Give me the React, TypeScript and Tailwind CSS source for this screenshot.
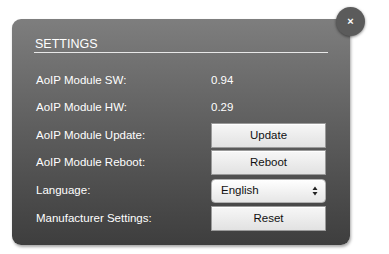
import React from "react";

const font = { fontFamily: '"Liberation Sans", Arial, Helvetica, sans-serif' };

function Btn({ label }: { label: string }) {
  return (
    <div className="w-[115px] h-[25px] flex items-center justify-center border border-[#9a9a9a] bg-gradient-to-b from-[#f7f7f7] to-[#e2e2e2] text-[#111] text-[11.5px] shadow-[inset_0_1px_0_#fff]">
      {label}
    </div>
  );
}

function Row({ label, children, h }: { label: string; children: React.ReactNode; h: string }) {
  return (
    <div className={`flex items-center ${h}`}>
      <div className="w-[175px] text-white text-[11.5px]">{label}</div>
      {children}
    </div>
  );
}

export default function App() {
  return (
    <div className="w-[389px] h-[254px] bg-white pl-[12px] pt-[19px]" style={font}>
      <div className="relative w-[338px] h-[226px] rounded-[9px] bg-gradient-to-b from-[#7e7e7e] to-[#3e3e3e] shadow-[1px_2px_3px_rgba(0,0,0,0.35)] pl-[22px] pr-[22px] pt-[18px]">
        <div className="absolute right-[-15px] top-[-12px] w-[29px] h-[29px] rounded-full bg-[#5b5b5b] shadow-[0_1px_3px_rgba(0,0,0,0.5)] flex items-center justify-center text-white text-[11px] font-bold leading-none">
          ×
        </div>
        <div className="border-b border-[#e8e8e8] pb-[1px] pl-[1px] text-white text-[12.5px] leading-[14px]">
          SETTINGS
        </div>
        <div className="mt-[14px] pl-[2px] flex flex-col">
          <Row label="AoIP Module SW:" h="h-[27px]">
            <span className="text-white text-[11.5px]">0.94</span>
          </Row>
          <Row label="AoIP Module HW:" h="h-[27px]">
            <span className="text-white text-[11.5px]">0.29</span>
          </Row>
          <div className="mt-[2px] flex flex-col gap-[2px]">
            <Row label="AoIP Module Update:" h="h-[25px]">
              <Btn label="Update" />
            </Row>
            <Row label="AoIP Module Reboot:" h="h-[25px]">
              <Btn label="Reboot" />
            </Row>
            <Row label="Language:" h="h-[27px]">
              <div className="w-[115px] h-[24px] rounded-[4px] bg-gradient-to-b from-[#ffffff] to-[#e6e6e6] border border-[#b0b0b0] flex items-center justify-between pl-[9px] pr-[7px] text-[#111] text-[11.5px]">
                <span>English</span>
                <svg width="6" height="10" viewBox="0 0 6 10">
                  <path d="M3 0.5 L5.5 4 L0.5 4 Z" fill="#222" />
                  <path d="M3 9.5 L5.5 6 L0.5 6 Z" fill="#222" />
                </svg>
              </div>
            </Row>
            <Row label="Manufacturer Settings:" h="h-[25px]">
              <Btn label="Reset" />
            </Row>
          </div>
        </div>
      </div>
    </div>
  );
}
